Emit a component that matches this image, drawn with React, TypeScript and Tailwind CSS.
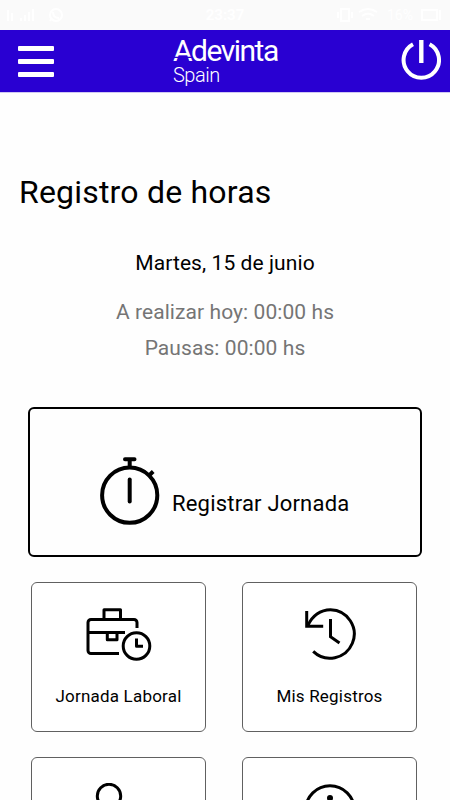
import type { ReactNode } from 'react';

function StatusBar() {
  return (
    <div className="grid h-[30px] grid-cols-[1fr_auto_1fr] items-center bg-[#fafafa] px-[7px] text-white">
      <svg width="58" height="18" viewBox="0 0 58 18" fill="none" stroke="currentColor" strokeWidth="2">
        <path d="M1 4v11M5 7v8M14 12v3M18 9v6M22 6v9M26 3v12" />
        <circle cx="49" cy="9" r="6" />
        <path d="M46 6c0 4 2 6 6 6M43 15l2-3" />
      </svg>
      <span className="text-[15px] font-bold leading-none">23:37</span>
      <div className="flex items-center justify-end gap-2">
        <svg width="42" height="16" viewBox="0 0 42 16" fill="none" stroke="currentColor" strokeWidth="2">
          <path d="M4 2h8v12H4zM1 5v6M15 5v6M22 5c6-4 12-4 18 0M25 9c4-3 8-3 12 0M29 12h4" />
        </svg>
        <span className="text-[14px] leading-none">16%</span>
        <svg width="22" height="14" viewBox="0 0 22 14" fill="none" stroke="currentColor" strokeWidth="2">
          <path d="M1 2h15v10H1zM19 2v10" />
        </svg>
      </div>
    </div>
  );
}

function Header() {
  return (
    <header className="flex h-[62px] bg-[#2900d2] pl-[18px] pr-[9px] text-white shadow-[0_1px_0_#cfc8f2]">
      <button className="mt-4 flex h-[31px] w-9 flex-col justify-between">
        <span className="h-[5px] w-9 rounded-[1px] bg-white" />
        <span className="h-[5px] w-9 rounded-[1px] bg-white" />
        <span className="h-[5px] w-9 rounded-[1px] bg-white" />
      </button>
      <div className="relative ml-[119px] w-[108px] pt-[5px]">
        <div className="text-[30px] leading-[32px] tracking-[-1.5px]">Adevinta</div>
        <div className="-mt-[2px] text-[20px] font-light leading-[20px] tracking-[-0.5px]">Spain</div>
        {/* Notches in the legs of the A */}
        <svg className="absolute left-0 top-[25px]" width="20" height="4" viewBox="0 0 20 4" stroke="#2900d2" strokeWidth="1.4">
          <path d="M0 2.4h6M14 2.4h6" />
        </svg>
      </div>
      <button className="ml-auto mt-2 h-[44px] w-10">
        <svg width="40" height="44" viewBox="0 0 40 44" fill="none" stroke="white">
          <path d="M12 6.3A17.7 17.7 0 1 0 28.6 6.3" strokeWidth="4" />
          <path d="M20.3 2v23" strokeWidth="4.4" />
        </svg>
      </button>
    </header>
  );
}

function StopwatchIcon() {
  return (
    <svg width="60" height="70" viewBox="0 0 60 70" fill="none" stroke="black" strokeLinecap="round">
      <circle cx="29.7" cy="38.2" r="27.6" strokeWidth="4" />
      <path d="M25 2.3h9.5M29.7 3v7" strokeWidth="4" />
      <path d="M29.7 22.5v22" strokeWidth="4" />
      <path d="M49 18.5l4.2-4" strokeWidth="4" strokeLinecap="butt" />
    </svg>
  );
}

function BriefcaseClockIcon() {
  return (
    <svg width="66" height="54" viewBox="0 0 66 54" fill="none" stroke="black" strokeWidth="3" strokeLinejoin="round">
      <path d="M18 11V1.7h16.5V11" />
      <path d="M33 45.5H5a3 3 0 0 1-3-3V14.5a3 3 0 0 1 3-3h43a3 3 0 0 1 3 3V20" />
      <path d="M2 24.5h37M21.3 25v6.7H31V25" />
      <circle cx="50.5" cy="38" r="13.3" />
      <path d="M50.5 30.5v7.8h6.5" />
    </svg>
  );
}

function HistoryIcon() {
  return (
    <svg width="52" height="52" viewBox="0 0 52 52" fill="none" stroke="black" strokeWidth="3">
      <path d="M4 17.5C8 8 16.5 1.8 26.5 1.8a24.2 24.2 0 1 1-17.3 41.6" />
      <path d="M2.7 3v15.2h16.5" />
      <path d="M26.5 11v17.8l9 6.2" />
    </svg>
  );
}

function UserIcon() {
  return (
    <svg className="-ml-5" width="52" height="54" viewBox="0 0 52 54" fill="none" stroke="black" strokeWidth="3">
      <circle cx="26" cy="13" r="11.7" />
      <path d="M2 53c0-14 10-22 24-22s24 8 24 22" />
    </svg>
  );
}

function InfoIcon() {
  return (
    <svg width="52" height="54" viewBox="0 0 52 54" fill="none" stroke="black" strokeWidth="3">
      <circle cx="26" cy="27" r="24.3" />
      <circle cx="26" cy="15" r="3" fill="black" stroke="none" />
      <path d="M26 22v18" />
    </svg>
  );
}

function MenuCard({ icon, label }: { icon: ReactNode; label?: string }) {
  return (
    <button className="flex h-[150px] flex-col items-center rounded-[6px] border border-[#606060] bg-white pt-[25px]">
      <span className="flex h-[54px] items-start">{icon}</span>
      <span className="mt-[23px] text-[17px] leading-[22px] tracking-[0.2px]">{label}</span>
    </button>
  );
}

export default function App() {
  return (
    <div className="h-[800px] w-[450px] overflow-hidden bg-[#fefefe] font-['Roboto',sans-serif] text-black">
      <StatusBar />
      <Header />

      <main>
        <h1 className="mt-20 pl-[19px] text-[32px] leading-[40px] tracking-[0.2px]">Registro de horas</h1>

        {/* Day summary */}
        <div className="mt-[37px] text-center text-[21px] leading-[28px] tracking-[0.08px]">
          <p>Martes, 15 de junio</p>
          <div className="mt-[17px] leading-[36px] text-[#757575]">
            <p>A realizar hoy: 00:00 hs</p>
            <p>Pausas: 00:00 hs</p>
          </div>
        </div>

        <button className="ml-7 mt-[41px] flex h-[150px] w-[394px] rounded-[6px] border-2 border-black pl-[70px] pt-[48px]">
          <StopwatchIcon />
          <span className="ml-3 mt-[33px] text-[22px] leading-[28px] tracking-[0.2px]">Registrar Jornada</span>
        </button>

        {/* Menu */}
        <div className="ml-[31px] mt-[25px] grid grid-cols-[175px_175px] gap-x-9 gap-y-[25px]">
          <MenuCard icon={<BriefcaseClockIcon />} label="Jornada Laboral" />
          <MenuCard icon={<HistoryIcon />} label="Mis Registros" />
          <MenuCard icon={<UserIcon />} />
          <MenuCard icon={<InfoIcon />} />
        </div>
      </main>
    </div>
  );
}
